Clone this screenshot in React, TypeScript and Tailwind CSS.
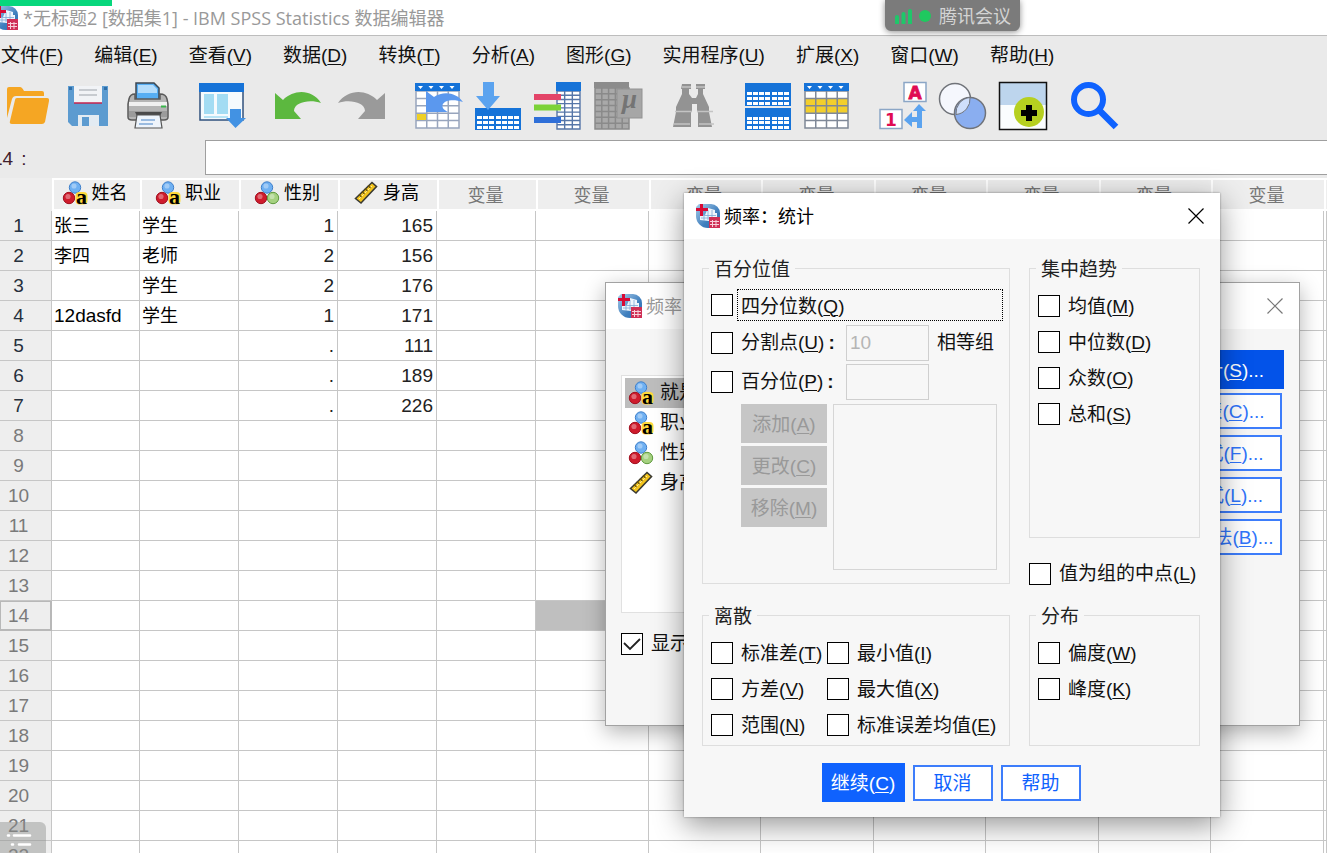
import type { ReactNode } from "react";

const SANS = "font-['Liberation_Sans','Noto_Sans_CJK_SC',sans-serif]";
const UI = "font-['Open_Sans','Noto_Sans_CJK_SC',sans-serif]";

function Mn({ text, k, tail }: { text: string; k?: string; tail?: string }) {
  return (
    <span className="whitespace-nowrap pt-px">
      {text}
      {k && (
        <>
          (<u className="underline-offset-2 decoration-1">{k}</u>)
        </>
      )}
      {tail}
    </span>
  );
}

function AppLogo() {
  return (
    <svg viewBox="0 0 24 24" className="size-6 shrink-0" aria-hidden="true">
      <defs>
        <linearGradient id="logoBlue" x1="0" y1="0" x2="1" y2="1">
          <stop offset="0" stopColor="#a9cbe8" />
          <stop offset="0.6" stopColor="#3f7fbe" />
          <stop offset="1" stopColor="#2f6eb0" />
        </linearGradient>
      </defs>
      <path d="M3 0h12a9 9 0 0 1 9 9v4H13v11h-1A12 12 0 0 1 0 12V3z" fill="url(#logoBlue)" />
      <path d="M12 4l7 2v3h2v4h-8v4l-9-1v-5h5z" fill="#eef5fc" />
      <path d="M5 11.500h15M5 14h8M8 10v7M12 6v10M16 6v7" stroke="#7ba8d6" strokeWidth="0.800" fill="none" />
      <path d="M0 4h4V0h3v4h5v3H7v5H4V7H0z" fill="#d80a35" />
      <rect x="13" y="13" width="11" height="11" fill="#cf2f55" />
      <path d="M14 17.500h9M14 20.500h9M16.500 16v7M20 16v7" stroke="#f7d0d9" strokeWidth="1" />
    </svg>
  );
}

function Ball({ cx, cy, r, c, d }: { cx: number; cy: number; r: number; c: string; d: string }) {
  return (
    <>
      <circle cx={cx} cy={cy} r={r} fill={c} stroke={d} strokeWidth="1" />
      <circle cx={cx - 1} cy={cy - 1.5} r={r * 0.45} fill="#fff" opacity="0.35" />
    </>
  );
}

function VarIcon({ kind }: { kind: string }) {
  if (kind === "scale") {
    return (
      <svg viewBox="0 0 24 24" className="size-6 shrink-0" aria-hidden="true">
        <path d="M1.500 17.500L18 1.500l4.500 4L7 22z" fill="#f3c41c" stroke="#3a3a32" strokeWidth="1.600" />
        <path d="M5 18L18 5" stroke="#fff0a0" strokeWidth="1" />
        <path d="M5 13.500l2.500 2.500M8 10.500l2.500 2.500M11 7.500l2.500 2.500M14 4.500l2.500 2.500" stroke="#6b5200" strokeWidth="1.200" />
      </svg>
    );
  }
  return (
    <svg viewBox="0 0 24 24" className="size-6 shrink-0 overflow-visible" aria-hidden="true">
      <Ball cx={12} cy={6.5} r={5.7} c="#6fb0f2" d="#3f7fca" />
      <Ball cx={6} cy={17} r={5.7} c="#cf1b2c" d="#a01020" />
      {kind === "string" ? (
        <>
          <rect x="12.500" y="11" width="12" height="12.500" rx="4" fill="#ffd93a" />
          <text x="13" y="23" fontFamily="Liberation Serif, serif" fontWeight="700" fontSize="22" fill="#000">
            a
          </text>
        </>
      ) : (
        <Ball cx={18} cy={17} r={5.7} c="#a5d180" d="#5f9a3e" />
      )}
    </svg>
  );
}

function Grid({ x, y, w, h, cols, rows, c, sw = 1 }: { x: number; y: number; w: number; h: number; cols: number; rows: number; c: string; sw?: number }) {
  let d = `M${x} ${y}h${w}v${h}h${-w}z`;
  for (let i = 1; i < cols; i++) d += `M${x + (w * i) / cols} ${y}v${h}`;
  for (let i = 1; i < rows; i++) d += `M${x} ${y + (h * i) / rows}h${w}`;
  return <path d={d} stroke={c} strokeWidth={sw} fill="none" />;
}

const CARETS = "M4 4h5l-2.500 3zM14.500 4h5l-2.500 3zM25 4h5l-2.500 3zM35.500 4h5l-2.500 3z";

const groups: { ml: string; icons: { name: string; art: ReactNode }[] }[] = [
  {
    ml: "ml-1",
    icons: [
      {
        name: "打开",
        art: (
          <>
            <path d="M3 36V7q0-2 2-2h11q2 0 4 4h18q2 0 2 2v3H12q-3 0-4 3z" fill="#f5a623" />
            <path d="M13 16h30q2.500 0 2 3l-4 21q-1 2-3 2H8q-3 0-2-3l5-21q0-2 2-2z" fill="#f5a623" />
          </>
        ),
      },
      {
        name: "保存",
        art: (
          <>
            <path d="M4 4h40v40H8l-4-4z" fill="#5c9bd0" />
            <rect x="10" y="4" width="28" height="17" fill="#f1f3f6" />
            <path d="M10 21h28" stroke="#c5224c" strokeWidth="1.500" />
            <path d="M15 8h18M15 13h18" stroke="#b9bec4" strokeWidth="1.500" />
            <path d="M14 44V33h21v11z" fill="#e3ebf2" />
            <path d="M18 44v-9h7v9z" fill="#5c9bd0" />
            <path d="M5 5h3v3H5zM40 5h3v3h-3z" fill="#2f6ea8" />
          </>
        ),
      },
      {
        name: "打印",
        art: (
          <>
            <path d="M12 18V1h18l5 5v12z" fill="#57aef3" stroke="#3c4650" strokeWidth="1.500" />
            <path d="M14 3h15l4 4v4H14z" fill="#b4dcfb" />
            <path d="M5 17q1-5 6-5v5h25v-5q6 0 7 5l1 5v13q0 3-4 3H8q-4 0-4-3V22z" fill="#b5b5b5" stroke="#5a5a5a" strokeWidth="1.500" />
            <path d="M5 20h38v4H5z" fill="#f0f0f0" />
            <path d="M5 29h38v6H5z" fill="#9b9b9b" />
            <path d="M37 24.500h5" stroke="#38b54a" strokeWidth="2" />
            <path d="M11 30h27l-2 4H13z" fill="#4a4a4a" />
            <path d="M13 33h23l2 13H11z" fill="#eef4fb" stroke="#555" strokeWidth="1.200" />
            <path d="M17 38h14M15 42h14" stroke="#7fa8d8" strokeWidth="1.500" />
          </>
        ),
      },
    ],
  },
  {
    ml: "ml-[26px]",
    icons: [
      {
        name: "重新调用对话框",
        art: (
          <>
            <rect x="2" y="2" width="43" height="36" fill="#f5fafd" stroke="#31517d" strokeWidth="1.500" />
            <rect x="1" y="1" width="45" height="9" fill="#1673d8" />
            <path d="M6 12h10v20H6zM19 12h11v20H19z" fill="#a3dcf3" />
            <path d="M6 35h24" stroke="#a3dcf3" strokeWidth="1.500" />
            <path d="M32 27h11v9h5L37.500 46 28 36h4z" fill="#4292e3" />
          </>
        ),
      },
    ],
  },
  {
    ml: "ml-[26px]",
    icons: [
      {
        name: "撤销",
        art: <path d="M3 11l8 7C22 7 40 7 49 21 38 17 22 20 22 29l7 8H3z" fill="#5cb83f" />,
      },
    ],
  },
  {
    ml: "ml-[18px]",
    icons: [
      {
        name: "重做",
        art: <path d="M47 11l-8 7C28 7 10 7 0 21c11-4 27-1 27 8l-7 8h27z" fill="#9a9a9a" />,
      },
    ],
  },
  {
    ml: "ml-[28px]",
    icons: [
      {
        name: "转到个案",
        art: (
          <>
            <rect x="2" y="2" width="43" height="44" fill="#fff" />
            <Grid x={2} y={9} w={43} h={37} cols={4} rows={5} c="#98a5bd" sw={1.5} />
            <rect x="1" y="1" width="45" height="8" fill="#1673d8" />
            <path d={CARETS} fill="#fff" />
            <rect x="3" y="32" width="9" height="6" fill="#efd026" />
            <path d="M12 9l8 6c9-6 22-5 29 5-9-3-18-2-20 2-2 3 1 6 5 8H12z" fill="#5b98ee" />
          </>
        ),
      },
      {
        name: "转到变量",
        art: (
          <>
            <rect x="1" y="26" width="46" height="22" fill="#1673d8" />
            <g fill="#fff">
              {[34, 39, 44].map((y) =>
                [3, 9, 15, 22, 28, 34, 40].map((x) => <rect key={`${x}-${y}`} x={x} y={y} width="5" height="3" />),
              )}
            </g>
            <path d="M9 0h11v14h6L14 28 2 14h7z" fill="#5ba3ef" />
          </>
        ),
      },
      {
        name: "变量",
        art: (
          <>
            <rect x="23" y="1" width="23" height="46" fill="#fff" />
            <Grid x={23} y={9} w={23} h={38} cols={3} rows={9} c="#5676a8" sw={1.4} />
            <rect x="22" y="0" width="25" height="9" fill="#1673d8" />
            <path d="M0 15h27" stroke="#e34468" strokeWidth="6" />
            <path d="M0 25.500h27" stroke="#7bd238" strokeWidth="6" />
            <path d="M0 38h27" stroke="#2f6fd8" strokeWidth="6" />
          </>
        ),
      },
      {
        name: "运行描述统计",
        art: (
          <>
            <rect x="1" y="1" width="34" height="46" fill="#a9a9a9" />
            <Grid x={1} y={6} w={34} h={41} cols={5} rows={7} c="#8a8a8a" sw={1.5} />
            <rect x="0" y="0" width="35" height="6" fill="#8c8c8c" />
            <rect x="23" y="7" width="25" height="29" fill="#a6a6a6" stroke="#929292" />
            <text x="28" y="26" fontFamily="Liberation Serif, serif" fontStyle="italic" fontWeight="700" fontSize="27" fill="#747474">
              μ
            </text>
          </>
        ),
      },
    ],
  },
  {
    ml: "ml-[27px]",
    icons: [
      {
        name: "查找",
        art: (
          <>
            <path
              d="M13 2h9v5h-2v5l3 4h4l2-4V7h-2V2h9v5h-2v5l6 13v5l3 15H29V31l-1-3v-6h-5v6l-1 3v14H4l3-15v-5l6-13V7h-1z"
              fill="#939393"
            />
            <path d="M6 29.500h16M28 29.500h16M13 5h9M27 5h9M5 42h16M30 42h15" stroke="#c4c4c4" strokeWidth="1.300" />
          </>
        ),
      },
    ],
  },
  {
    ml: "ml-[27px]",
    icons: [
      {
        name: "拆分文件",
        art: (
          <>
            <path d="M1 1h46v23H1zM1 26h46v22H1z" fill="#1673d8" />
            <g fill="#fff">
              {[10, 15, 20, 35, 39, 44].map((y) =>
                [3, 9, 15, 21, 28, 34, 40].map((x) => <rect key={`${x}-${y}`} x={x} y={y} width="5" height="3" />),
              )}
            </g>
          </>
        ),
      },
      {
        name: "选择个案",
        art: (
          <>
            <rect x="1" y="2" width="43" height="44" fill="#fff" />
            <rect x="1" y="16" width="43" height="15" fill="#f3cf2c" />
            <Grid x={1} y={9} w={43} h={37} cols={4} rows={5} c="#7f8897" sw={1.5} />
            <rect x="0" y="1" width="45" height="8" fill="#1673d8" />
            <path d="M3 4h5l-2.500 3zM13.500 4h5l-2.500 3zM24 4h5l-2.500 3zM34.500 4h5l-2.500 3z" fill="#fff" />
          </>
        ),
      },
    ],
  },
  {
    ml: "ml-[27px]",
    icons: [
      {
        name: "值标签",
        art: (
          <>
            <rect x="25" y="0.500" width="22" height="19" fill="#fff" stroke="#8ba6c6" strokeWidth="1.500" />
            <rect x="1" y="27.500" width="22" height="19" fill="#fff" stroke="#8ba6c6" strokeWidth="1.500" />
            <text x="29.500" y="16.500" fontFamily="DejaVu Sans, sans-serif" fontWeight="700" fontSize="17" fill="#e00b52" stroke="#e00b52" strokeWidth="0.800">
              A
            </text>
            <text x="6" y="43.500" fontFamily="DejaVu Sans, sans-serif" fontWeight="700" fontSize="17" fill="#e00b52">
              1
            </text>
            <path d="M38 46V40h-5v5l-8-7 8-8v5h5v-6h-4l6-7 7 7h-4v17z" fill="#5ba3ef" />
          </>
        ),
      },
      {
        name: "使用变量集",
        art: (
          <>
            <circle cx="16" cy="17" r="15.500" fill="#f5f7fd" stroke="#707379" strokeWidth="1.500" />
            <circle cx="31" cy="31" r="15.500" fill="#8aaef0" stroke="#707379" strokeWidth="1.500" />
            <path d="M17 32.500A15.500 15.500 0 0 1 31 15.500 15.500 15.500 0 0 1 17 32.500z" fill="#cfdffb" stroke="#707379" />
          </>
        ),
      },
      {
        name: "定制工具栏",
        art: (
          <>
            <rect x="1" y="1" width="46" height="46" fill="#fafdfe" />
            <path d="M1 1h46v22H1z" fill="#bdd5ed" />
            <circle cx="30" cy="30" r="15" fill="#b6d020" />
            <path d="M27 23h6v5h5v6h-5v5h-6v-5h-5v-6h5z" fill="#000" />
            <rect x="0.500" y="0.500" width="47" height="47" fill="none" stroke="#111" strokeWidth="1.500" />
          </>
        ),
      },
    ],
  },
  {
    ml: "ml-6",
    icons: [
      {
        name: "搜索",
        art: (
          <>
            <circle cx="17.500" cy="17.500" r="14.500" fill="none" stroke="#0f62fe" strokeWidth="6" />
            <path d="M29 29l16 16" stroke="#0f62fe" strokeWidth="6.500" />
          </>
        ),
      },
    ],
  },
];

const menus = [
  ["文件", "F"],
  ["编辑", "E"],
  ["查看", "V"],
  ["数据", "D"],
  ["转换", "T"],
  ["分析", "A"],
  ["图形", "G"],
  ["实用程序", "U"],
  ["扩展", "X"],
  ["窗口", "W"],
  ["帮助", "H"],
];

const vars = [
  { name: "姓名", kind: "string" },
  { name: "职业", kind: "string" },
  { name: "性别", kind: "nominal" },
  { name: "身高", kind: "scale" },
];
const rows = [
  ["张三", "学生", "1", "165"],
  ["李四", "老师", "2", "156"],
  ["", "学生", "2", "176"],
  ["12dasfd", "学生", "1", "171"],
  ["", "", ".", "111"],
  ["", "", ".", "189"],
  ["", "", ".", "226"],
];

function DataGrid() {
  return (
    <table className="w-full min-w-[1327px] table-fixed border-separate border-spacing-0 bg-white text-[19px] leading-6">
      <colgroup>
        <col className="w-[52px]" />
        <col className="w-[88px]" />
        <col className="w-[99px]" />
        <col className="w-[99px]" />
        <col className="w-[99px]" />
        <col className="w-[99px]" />
        <col className="w-[113px]" />
        <col className="w-[112px]" />
        <col className="w-[113px]" />
        <col className="w-[112px]" />
        <col className="w-[113px]" />
        <col className="w-[112px]" />
        <col className="w-[113px]" />
        <col />
      </colgroup>
      <thead>
        <tr className="h-[33px] text-[18px]">
          <td className="bg-[#eeeeee] p-0" />
          {vars.map((v) => (
            <th key={v.name} scope="col" className="border-2 border-r-0 border-white bg-[#eeeeee] p-0 pb-[3px] font-normal text-black">
              <span className="flex items-center justify-center gap-[5px] pr-1">
                <VarIcon kind={v.kind} />
                {v.name}
              </span>
            </th>
          ))}
          {Array.from({ length: 8 }, (_, i) => (
            <th key={i} scope="col" className="border-2 border-r-0 border-white bg-[#eeeeee] p-0 pt-[3px] pr-1 font-normal text-[#777]">
              变量
            </th>
          ))}
          <td className="border-2 border-r-0 border-white bg-[#eeeeee] p-0" />
        </tr>
      </thead>
      <tbody>
        {Array.from({ length: 22 }, (_, r) => (
          <tr key={r} className="h-[30px]">
            <th
              scope="row"
              className={
                r === 13
                  ? "border border-r-2 border-b-2 border-[#b8b8b8] bg-[#eeeeee] p-0 pr-[14px] font-normal text-[#7a7a7a]"
                  : r < 7
                    ? "border-r border-b border-[#c6c6c6] bg-[#eeeeee] p-0 pr-[14px] font-normal text-[#26303c]"
                    : "border-r border-b border-[#c6c6c6] bg-[#eeeeee] p-0 pr-[14px] font-normal text-[#7a7a7a]"
              }
            >
              {r + 1}
            </th>
            {Array.from({ length: 13 }, (_, c) => {
              const t = rows[r]?.[c] ?? "";
              return (
                <td
                  key={c}
                  className={
                    r === 13 && c === 5
                      ? "border-r border-b border-[#c6c6c6] bg-[#bfbfbf] p-0"
                      : c === 0 || c === 1
                        ? "border-r border-b border-[#c6c6c6] p-0 pl-[2px] text-black"
                        : "border-r border-b border-[#c6c6c6] p-0 pr-[3px] text-right text-[#222]"
                  }
                >
                  {c < 2 && t.length < 5 ? <span className="text-[18px]">{t}</span> : t}
                </td>
              );
            })}
          </tr>
        ))}
      </tbody>
    </table>
  );
}

function Check({ text, k, checked }: { text: string; k?: string; checked?: boolean }) {
  return (
    <label className="flex items-center gap-2">
      <Box checked={checked} />
      <Mn text={text} k={k} />
    </label>
  );
}

function Box({ checked, id }: { checked?: boolean; id?: string }) {
  return (
    <span className="grid size-[22px] shrink-0">
      <input
        id={id}
        type="checkbox"
        defaultChecked={checked}
        className="peer col-start-1 row-start-1 size-[22px] appearance-none border border-black bg-white"
      />
      <svg viewBox="0 0 22 22" className="pointer-events-none invisible col-start-1 row-start-1 peer-checked:visible" aria-hidden="true">
        <path d="M3 10l6 6L19 6" fill="none" stroke="#222" strokeWidth="1.800" />
      </svg>
    </span>
  );
}

function Group({ title, className, children }: { title: string; className: string; children: ReactNode }) {
  return (
    <fieldset className={`min-w-0 border border-[#dedede] ${className}`}>
      <legend className="-ml-0.5 px-[5px] pt-1 leading-6 text-[#222]">{title}</legend>
      {children}
    </fieldset>
  );
}

function CloseButton({ className }: { className: string }) {
  return (
    <button type="button" aria-label="关闭" className={`ml-auto grid size-6 place-items-center ${className}`}>
      <svg viewBox="0 0 16 16" className="size-4" aria-hidden="true">
        <path d="M0.500 0.500l15 15M15.500 0.500l-15 15" stroke="currentColor" strokeWidth="1.200" />
      </svg>
    </button>
  );
}

function FrequencyDialog() {
  const side = [
    ["图表", "C"],
    ["格式", "F"],
    ["样式", "L"],
    ["自助法", "B"],
  ];
  const list = [{ name: "就是", kind: "string" }, ...vars.slice(1)];
  return (
    <section aria-label="频率" className="absolute top-[282px] left-[605px] flex h-[444px] w-[695px] flex-col border border-[#a2a2a2] bg-[#f6f6f6] shadow-[0_6px_20px_rgba(0,0,0,0.3)]">
      <header className={`flex h-[46px] shrink-0 items-center gap-1 bg-white pr-3 pl-3 text-[18px] text-[#999] ${UI}`}>
        <AppLogo />
        频率
        <CloseButton className="text-[#777]" />
      </header>
      <div className="flex flex-1 justify-between pt-[21px] pl-[15px]">
        <div className="flex w-[250px] flex-col pt-[25px]">
          <ul className="h-[238px] border border-[#e1e1e1] bg-white py-[2px] pr-[2px] pl-[3px]">
            {list.map((v, i) => (
              <li
                key={v.name}
                className={i === 0 ? "flex h-[30px] items-center gap-[7px] bg-[#bdbdbd] pl-1" : "flex h-[30px] items-center gap-[7px] pl-1"}
              >
                <VarIcon kind={v.kind} />
                {v.name}
              </li>
            ))}
          </ul>
          <div className="mt-4">
            <Check text="显示" checked />
          </div>
        </div>
        <div className="mr-[15px] flex w-[119px] flex-col items-center gap-[6px] whitespace-nowrap">
          <button type="button" className="mb-[-2px] h-[39px] w-full bg-[#0353e9] pt-0.5 text-white">
            <Mn text="统计" k="S" tail="..." />
          </button>
          {side.map(([t, k]) => (
            <button key={k} type="button" className="h-9 w-[115px] border-2 border-[#3d7dfb] bg-white pt-0.5 text-[#2f74fb]">
              <Mn text={t} k={k} tail="..." />
            </button>
          ))}
        </div>
      </div>
    </section>
  );
}

function StatisticsDialog() {
  return (
    <section
      aria-label="频率：统计"
      className="absolute top-[193px] left-[684px] w-[536px] bg-[#f7f7f7] pb-[15px] shadow-[0_8px_28px_rgba(0,0,0,0.42),0_0_2px_rgba(0,0,0,0.4)]"
    >
      <header className={`flex h-[46px] items-center gap-1 bg-white px-3 text-[18px] text-black ${UI}`}>
        <AppLogo />
        频率：统计
        <CloseButton className="text-black" />
      </header>
      <form className="px-[18px] pt-[15px] text-[#111]" onSubmit={(e) => e.preventDefault()}>
        <div className="grid grid-cols-[308px_171px] gap-x-[19px] gap-y-[17px]">
          <Group title="百分位值" className="h-[330px] pl-2">
            <div className="flex items-center gap-1 pt-[7px] pr-1.5">
              <Box id="quart" />
              <label htmlFor="quart" className="flex h-8 flex-1 items-center border border-dotted border-black pt-0.5 pl-[3px]">
                <Mn text="四分位数" k="Q" />
              </label>
            </div>
            <div className="mt-1 flex h-9 items-center">
              <Box id="cut" />
              <label htmlFor="cut" className="ml-2 w-[105px] whitespace-nowrap">
                <Mn text="分割点" k="U" />
                <b className="ml-1">:</b>
              </label>
              <input
                type="text"
                disabled
                aria-label="分割点数"
                defaultValue="10"
                className="h-9 w-[83px] border border-[#cfcfcf] bg-[#f7f7f7] px-[3px] text-[#b5b5b5]"
              />
              <span className="ml-2">相等组</span>
            </div>
            <div className="mt-[3px] flex h-9 items-center">
              <Box id="pct" />
              <label htmlFor="pct" className="ml-2 w-[105px] whitespace-nowrap">
                <Mn text="百分位" k="P" />
                <b className="ml-1">:</b>
              </label>
              <input type="text" disabled aria-label="百分位值" className="h-9 w-[83px] border border-[#cfcfcf] bg-[#f7f7f7] px-[3px]" />
            </div>
            <div className="mt-1 ml-[30px] flex gap-[6px]">
              <div className="flex w-[86px] flex-col gap-[3px] text-[#999]">
                <button type="button" disabled className="h-[39px] bg-[#c6c6c6] pt-0.5">
                  <Mn text="添加" k="A" />
                </button>
                <button type="button" disabled className="h-[39px] bg-[#c6c6c6] pt-0.5">
                  <Mn text="更改" k="C" />
                </button>
                <button type="button" disabled className="h-[39px] bg-[#c6c6c6] pt-0.5">
                  <Mn text="移除" k="M" />
                </button>
              </div>
              <div className="h-[166px] w-[164px] border border-[#d6d6d6]" />
            </div>
          </Group>
          <div className="flex flex-col">
            <Group title="集中趋势" className="flex-1 pl-2">
              <div className="grid auto-rows-[36px] pt-1.5">
                <Check text="均值" k="M" />
                <Check text="中位数" k="D" />
                <Check text="众数" k="O" />
                <Check text="总和" k="S" />
              </div>
            </Group>
            <div className="mt-6 h-[22px] leading-[22px]">
              <Check text="值为组的中点" k="L" />
            </div>
          </div>
          <Group title="离散" className="pb-[2px] pl-2">
            <div className="grid auto-rows-[36px] grid-cols-[116px_auto] pt-1.5">
              <Check text="标准差" k="T" />
              <Check text="最小值" k="I" />
              <Check text="方差" k="V" />
              <Check text="最大值" k="X" />
              <Check text="范围" k="N" />
              <Check text="标准误差均值" k="E" />
            </div>
          </Group>
          <Group title="分布" className="pb-[2px] pl-2">
            <div className="grid auto-rows-[36px] pt-1.5">
              <Check text="偏度" k="W" />
              <Check text="峰度" k="K" />
            </div>
          </Group>
        </div>
        <div className="mt-[17px] flex items-center justify-center gap-2 pr-0.5">
          <button type="submit" className="h-[39px] w-[83px] bg-[#0f62fe] pt-0.5 text-white">
            <Mn text="继续" k="C" />
          </button>
          <button type="button" className="h-9 w-20 border-2 border-[#3d7dfb] bg-white pt-0.5 text-[#0f62fe]">
            取消
          </button>
          <button type="button" className="h-9 w-20 border-2 border-[#3d7dfb] bg-white pt-0.5 text-[#0f62fe]">
            帮助
          </button>
        </div>
      </form>
    </section>
  );
}

export default function App() {
  return (
    <div className={`relative h-screen overflow-hidden bg-[#eaeaea] text-[19px] leading-7 text-[#111] ${SANS}`}>
      <header className={`flex h-9 items-center gap-[5px] border-b border-[#bdbdbd] bg-white text-[18px] text-[#999] ${UI}`}>
        <span className="-ml-1.5 flex">
          <AppLogo />
        </span>
        <h1 className="whitespace-nowrap">*无标题2 [数据集1] - IBM SPSS Statistics 数据编辑器</h1>
      </header>
      <div className="absolute top-0 left-0 h-1.5 w-28 bg-[#07d77c]" />
      <nav className="flex h-[38px] items-center gap-[31px] pt-0.5 pl-px">
        {menus.map(([t, k]) => (
          <button key={k} type="button">
            <Mn text={t} k={k} />
          </button>
        ))}
      </nav>
      <div className="flex h-[66px] items-center pt-1.5 pb-2">
        {groups.map((g, i) => (
          <div key={i} className={`flex gap-3 ${g.ml}`}>
            {g.icons.map((ic) => (
              <button key={ic.name} type="button" aria-label={ic.name} className="size-12">
                <svg viewBox="0 0 48 48" className="size-12 overflow-visible" aria-hidden="true">
                  {ic.art}
                </svg>
              </button>
            ))}
          </div>
        ))}
      </div>
      <div className="flex h-[38px] items-start">
        <label htmlFor="cell" className="-ml-2 w-[213px] self-center text-[#40202c]">
          14<span className="ml-2">:</span>
        </label>
        <input id="cell" type="text" className="h-[35px] min-w-0 flex-1 border border-r-0 border-[#9f9f9f] bg-white px-2" />
      </div>
      <DataGrid />
      <FrequencyDialog />
      <StatisticsDialog />
      <div className={`absolute top-0 left-[885px] flex h-[31px] w-[135px] items-center rounded-b-md bg-[#7b7b7b] pl-2.5 text-[18px] text-[#d4d4d4] shadow-[0_1px_6px_rgba(0,0,0,0.45)] ${UI}`}>
        <svg viewBox="0 0 36 16" className="mr-2 h-4 w-9" aria-hidden="true">
          <path d="M2 15V9M8.500 15V6M15 15V3" stroke="#1fc66a" strokeWidth="4" strokeLinecap="round" />
          <circle cx="30" cy="8" r="6" fill="#1fc95f" />
        </svg>
        腾讯会议
      </div>
      <div className="absolute bottom-0 left-0 h-[31px] w-[46px] rounded-tr-md bg-[#8b8f8b]/45">
        <svg viewBox="0 0 46 31" className="h-[31px] w-[46px]" aria-hidden="true">
          <path d="M8 13.500h1M14 13.500h16M12 22.500h1M19 22.500h11" stroke="#fff" strokeWidth="2.600" strokeLinecap="round" />
        </svg>
      </div>
    </div>
  );
}
